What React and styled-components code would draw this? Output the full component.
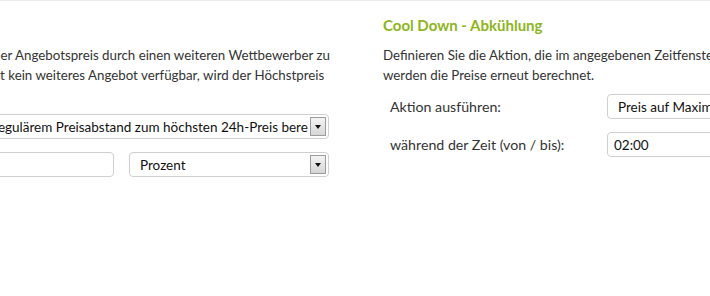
import React from "react";
import styled, { createGlobalStyle } from "styled-components";

const GlobalStyle = createGlobalStyle`
  html, body {
    margin: 0;
    padding: 0;
    background: #fff;
  }
  body {
    font-family: Lato, "Open Sans", sans-serif;
    color: #333;
  }
`;

const Page = styled.div`
  width: 710px;
  height: 296px;
  overflow: hidden;
  border-top: 1px solid #ececec;
  box-sizing: border-box;
`;

const Columns = styled.div`
  display: flex;
  gap: 53px;
  margin-left: -260px;
  padding-top: 14px;
`;

const Column = styled.section`
  flex: 0 0 590px;
  width: 590px;
`;

const Heading = styled.h3`
  margin: 0 0 10px;
  font-size: 15px;
  line-height: 20px;
  font-weight: 700;
  color: #8db51c;
  white-space: nowrap;
`;

const Text = styled.p`
  margin: 0 0 9px;
  font-size: 13.3px;
  line-height: 20px;
  white-space: nowrap;
`;

const Row = styled.div`
  display: flex;
  align-items: center;
  height: 25px;
  margin-bottom: 13px;
`;

const Label = styled.label`
  flex: 0 0 217px;
  padding-left: 7px;
  font-size: 14.2px;
  white-space: nowrap;
`;

const Controls = styled.div`
  display: flex;
  gap: 15px;
  width: 365px;
`;

const Field = styled.div`
  position: relative;
  display: flex;
  align-items: center;
  box-sizing: border-box;
  height: 25px;
  width: ${(p) => (p.width ? `${p.width}px` : "100%")};
  flex: ${(p) => (p.width ? "0 0 auto" : "1")};
  padding: 0 ${(p) => (p.arrow ? 20 : 6)}px 0 ${(p) => p.pad || 10}px;
  border: 1px solid #cfcfcf;
  border-radius: 4px;
  background: #fff;
  font-size: 13.5px;
  color: #111;
`;

const Value = styled.span`
  flex: 1;
  min-width: 0;
  overflow: hidden;
  white-space: nowrap;
`;

const Arrow = styled.span`
  position: absolute;
  right: 2px;
  top: 2px;
  bottom: 2px;
  width: 14px;
  border: 1px solid #9c9c9c;
  background: linear-gradient(#f4f4f4, #d6d6d6);
  display: flex;
  align-items: center;
  justify-content: center;

  &::after {
    content: "";
    border-left: 3.5px solid transparent;
    border-right: 3.5px solid transparent;
    border-top: 4px solid #111;
  }
`;

const Select = ({ children, width, pad, arrow = true }) => (
  <Field width={width} pad={pad} arrow={arrow}>
    <Value>{children}</Value>
    {arrow && <Arrow />}
  </Field>
);

export default function App() {
  return (
    <>
      <GlobalStyle />
      <Page>
        <Columns>
          <Column>
            <Heading>Unterbieten</Heading>
            <Text>
              Ist der eigene Preis über dem Limit, so wird der Angebotspreis durch einen weiteren Wettbewerber zu
              <br />
              Grunde gelegt. Für ausgewählten Zeitraum ist kein weiteres Angebot verfügbar, wird der Höchstpreis
              <br />
              verwendet.
            </Text>
            <Row>
              <Label>Preis berechnen:</Label>
              <Controls>
                <Select>Im regulärem Preisabstand zum höchsten 24h-Preis berechnen</Select>
              </Controls>
            </Row>
            <Row>
              <Label>Preisabstand:</Label>
              <Controls>
                <Select width={150} pad={6} arrow={false}></Select>
                <Select>Prozent</Select>
              </Controls>
            </Row>
          </Column>
          <Column>
            <Heading>Cool Down - Abkühlung</Heading>
            <Text>
              Definieren Sie die Aktion, die im angegebenen Zeitfenster ausgeführt werden soll. Danach
              <br />
              werden die Preise erneut berechnet.
            </Text>
            <Row>
              <Label>Aktion ausführen:</Label>
              <Controls>
                <Select>Preis auf Maximalpreis setzen</Select>
              </Controls>
            </Row>
            <Row>
              <Label>während der Zeit (von / bis):</Label>
              <Controls>
                <Select width={150} pad={6} arrow={false}>02:00</Select>
                <Select width={150} pad={6} arrow={false}>06:00</Select>
              </Controls>
            </Row>
          </Column>
        </Columns>
      </Page>
    </>
  );
}
